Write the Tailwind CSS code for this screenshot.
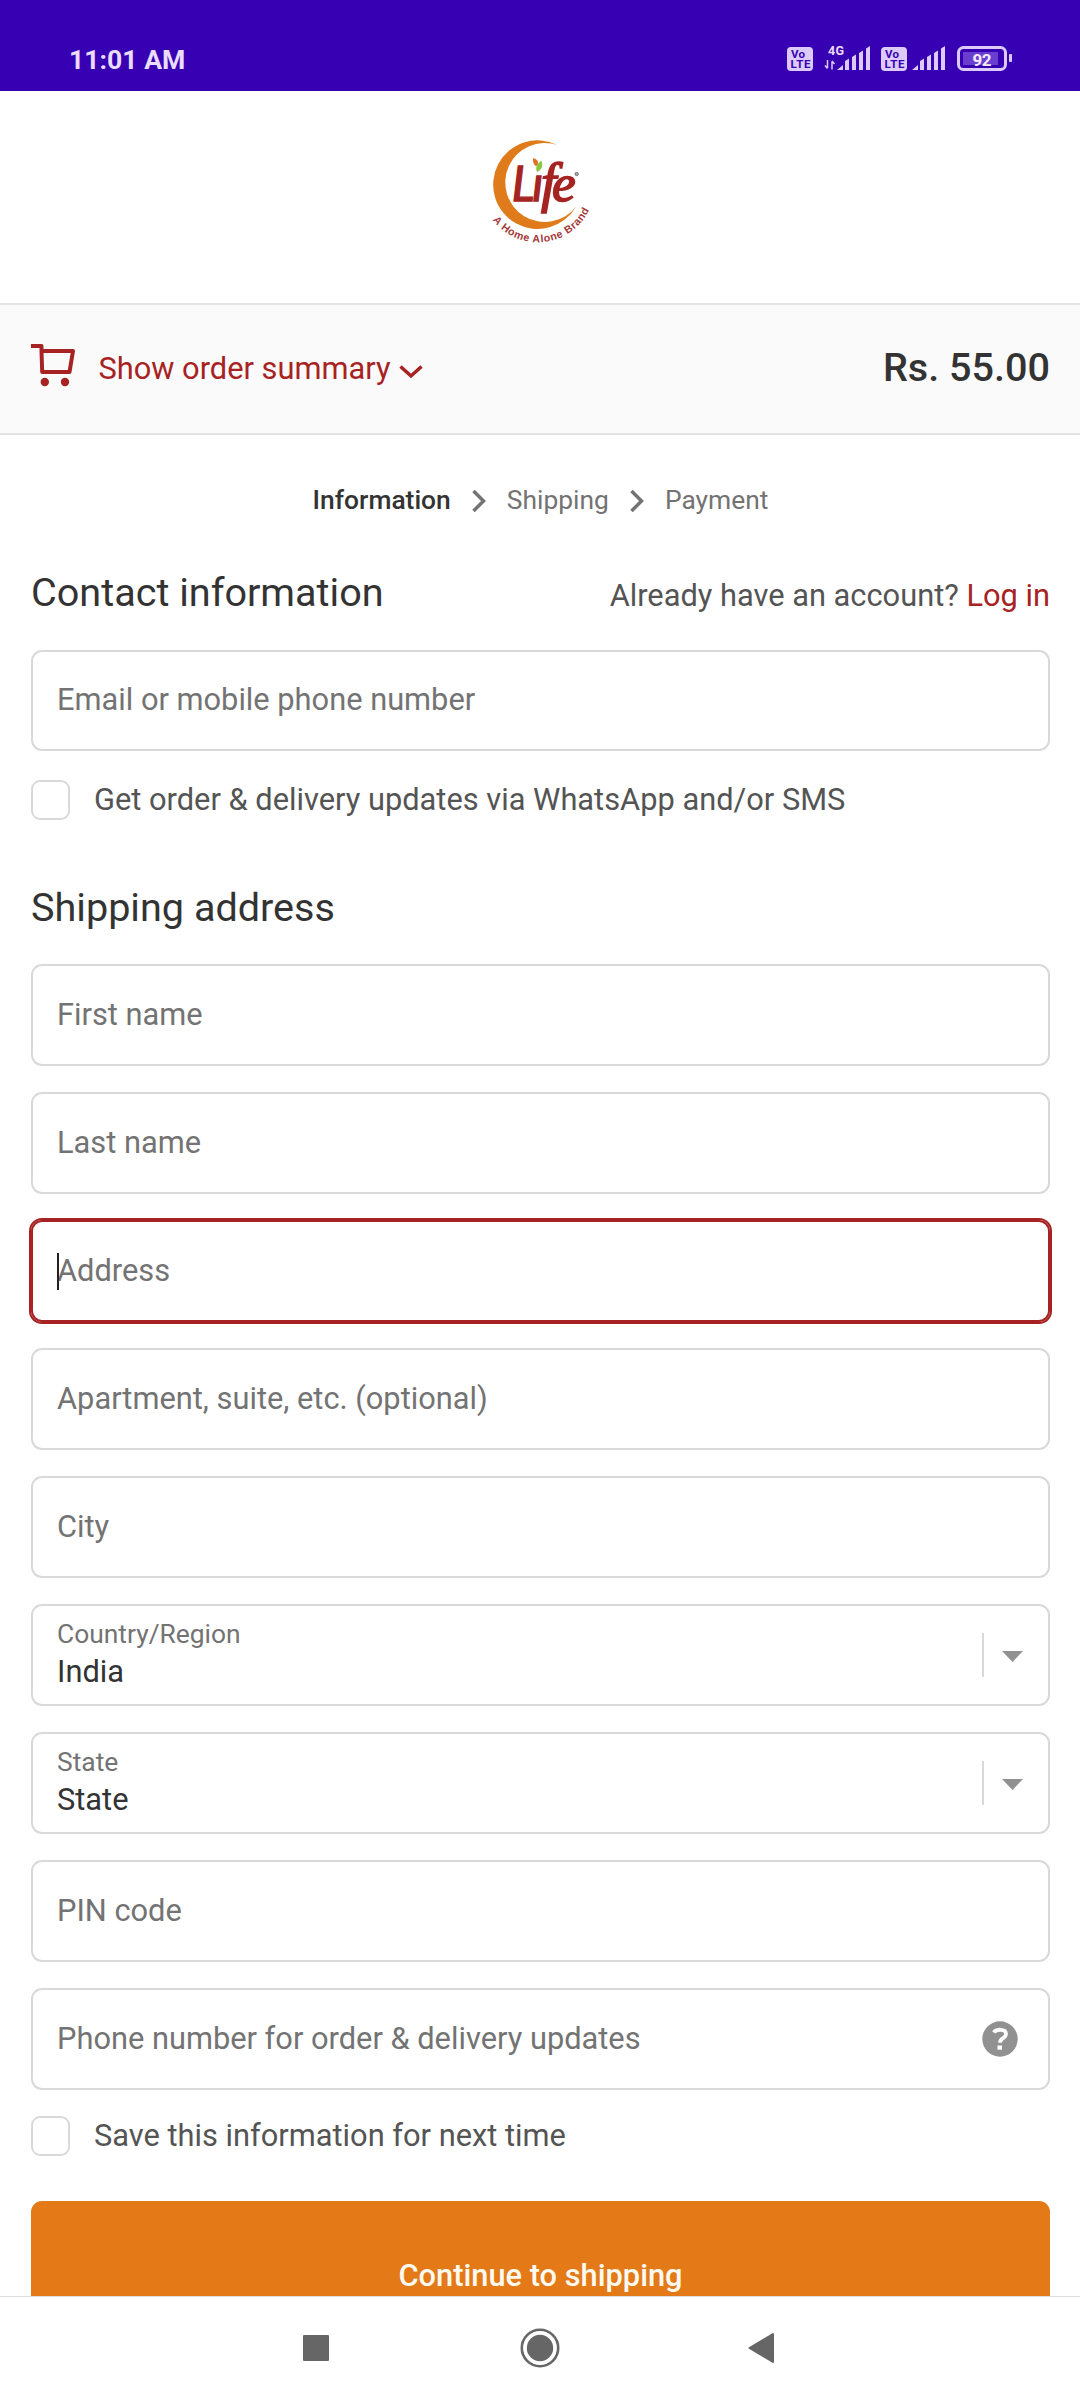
<!DOCTYPE html>
<html lang="en">
<head>
    <meta charset="UTF-8">
    <meta name="viewport" content="width=device-width, initial-scale=1.0">
    <title>Information - Life - Checkout</title>
    <script src="https://cdn.jsdelivr.net/npm/@tailwindcss/browser@4"></script>
</head>
<body class="bg-white">
    <div class="w-[1080px] h-[2400px] overflow-hidden flex flex-col bg-white font-[Roboto,sans-serif] text-[30.8px] text-[#545454]">

        <!-- Status bar -->
        <div class="h-[91px] shrink-0 bg-[#3700b3] flex justify-between pt-[40px] pl-[69px] pr-[68px] text-[#eadcff]">
            <span class="text-[26.6px] leading-10 font-bold">11:01 AM</span>
            <svg class="w-[226px] h-[40px]" viewBox="786 40 226 40" fill="#dccbfa" font-family="Roboto, sans-serif">
                <rect x="787" y="47" width="26" height="24" rx="4" />
                <text x="791" y="57.500" font-size="11.500" font-weight="700" fill="#3700b3" textLength="14">Vo</text>
                <text x="790.500" y="68" font-size="11.500" font-weight="700" fill="#3700b3" textLength="20">LTE</text>
                <text x="828" y="55" font-size="12.5" font-weight="700" fill="#eadcff" textLength="16">4G</text>
                <path d="M827.5 60v8M825 65.5l2.5 3M832 69.500v-8M832 61l2.500 3" stroke="#dccbfa" stroke-width="1.500" fill="none" />
                <path d="M837 70l6-5v5zM845 61l4-2.500v11.500h-4zM852 57l4-2.500v15.500h-4zM859 53l4-2.500v19.500h-4zM866 48.500l4-2.500v24h-4z" />
                <rect x="881" y="47" width="26" height="24" rx="4" />
                <text x="885" y="57.500" font-size="11.500" font-weight="700" fill="#3700b3" textLength="14">Vo</text>
                <text x="884.500" y="68" font-size="11.500" font-weight="700" fill="#3700b3" textLength="20">LTE</text>
                <path d="M912 70l6-5v5zM920 61l4-2.500v11.500h-4zM927 57l4-2.500v15.500h-4zM934 53l4-2.500v19.500h-4zM941 48.500l4-2.500v24h-4z" />
                <rect x="958.5" y="47.500" width="47" height="22" rx="5" fill="none" stroke="#dccbfa" stroke-width="3" />
                <rect x="963" y="52" width="35" height="13" fill="#6a3fd0" />
                <rect x="1009" y="54" width="3" height="8" rx="1" />
                <text x="972.500" y="65.500" font-size="17" font-weight="700" fill="#f3ebff" textLength="19">92</text>
            </svg>
        </div>

        <!-- Store logo -->
        <header class="h-[212px] shrink-0 flex justify-center pt-[29px]">
            <svg class="w-[140px] h-[140px]" viewBox="0 0 420 420" aria-label="Life, A Home Alone Brand">
                <path d="M262 75A133 133 0 1 0 318 260A118.500 118.500 0 1 1 262 75z" fill="#e07b1b" />
                <text y="242" font-style="italic" fill="#a52422" stroke="#a52422"><tspan x="125" font-family="Lato, sans-serif" font-weight="400" font-size="143" stroke-width="4">L</tspan><tspan x="187" font-family="Lato, sans-serif" font-weight="400" font-size="143" stroke-width="4">ı</tspan><tspan x="213" font-family="Liberation Serif, serif" font-size="165" stroke-width="5">f</tspan><tspan x="246" font-family="Liberation Serif, serif" font-size="160" stroke-width="5">e</tspan></text>
                <path d="M189 115c12 2 18 9 14 22l-8 0c-5-6-7-14-6-22z" fill="#dc7526" />
                <path d="M214 122c6 14 3 26-13 34c-6-13-1-25 13-34z" fill="#8cc63f" />
                <circle cx="320" cy="162" r="5" fill="#aaa" stroke="#777" stroke-width="3" />
                <path id="tagline" d="M68 300A171 171 0 0 0 360 265" fill="none" />
                <text font-family="Liberation Sans, sans-serif" font-size="32" font-weight="700" fill="#a5393b">
                    <textPath href="#tagline" textLength="348">A Home Alone Brand</textPath>
                </text>
            </svg>
        </header>

        <!-- Order summary toggle -->
        <div class="h-[132px] shrink-0 flex items-start justify-between pl-[31px] pr-[30px] border-y-2 border-[#e3e3e3] bg-[#fafafa]">
            <div class="flex text-[#a72323] pt-[38px]">
                <svg class="w-[46px] h-[46px]" viewBox="31 343 46 46" fill="none" stroke="currentColor" stroke-width="4">
                    <path d="M31 346h10.500v5M41.500 351h31.500l-3.500 21h-27.300z" stroke-linejoin="round" />
                    <circle cx="44.800" cy="382" r="4.200" fill="currentColor" stroke="none" />
                    <circle cx="65" cy="382" r="4.200" fill="currentColor" stroke="none" />
                </svg>
                <span class="ml-[21.5px] mt-[6px] leading-[40px]">Show order summary</span>
                <svg class="w-[24px] h-[16px] ml-[8px] mt-[21px]" viewBox="0 0 24 16" fill="none" stroke="currentColor" stroke-width="3.500">
                    <path d="M1.500 2.500l10.500 9.500l10.500-9.500" />
                </svg>
            </div>
            <span class="mt-[43px] leading-[40px] text-[39.6px] font-medium text-[#333]">Rs. 55.00</span>
        </div>

        <main class="h-[1861px] shrink-0 overflow-hidden flex flex-col pl-[31px] pr-[30px]">
            <!-- Breadcrumb -->
            <nav class="mt-[45px] flex justify-center items-center leading-[40px] text-[26.4px] text-[#737373]">
                <span class="font-medium text-[#333]">Information</span>
                <svg class="w-[16px] h-[24px] mx-[20px] mt-[2px]" viewBox="0 0 16 24" fill="none" stroke="#737373" stroke-width="3.500">
                    <path d="M2.500 2l10 10l-10 10" />
                </svg>
                <span>Shipping</span>
                <svg class="w-[16px] h-[24px] mx-[20px] mt-[2px]" viewBox="0 0 16 24" fill="none" stroke="#737373" stroke-width="3.500">
                    <path d="M2.500 2l10 10l-10 10" />
                </svg>
                <span>Payment</span>
            </nav>

            <!-- Contact -->
            <div class="mt-[49px] h-[48px] shrink-0 flex justify-between items-baseline leading-[48px]">
                <h2 class="text-[39.6px] text-[#333]">Contact information</h2>
                <p>Already have an account? <a class="text-[#a72323]">Log in</a></p>
            </div>
            <div class="mt-[33px] h-[101px] shrink-0 flex items-center px-[24px] border-2 border-[#d9d9d9] rounded-[11px] text-[#737373]">Email or mobile phone number</div>
            <label class="mt-[29px] h-[40px] shrink-0 flex items-center gap-[24px]">
                <span class="w-[39px] h-[40px] border-2 border-[#d9d9d9] rounded-[9px]"></span>
                <span class="leading-[40px]">Get order &amp; delivery updates via WhatsApp and/or SMS</span>
            </label>

            <!-- Shipping address -->
            <h2 class="mt-[64px] leading-[48px] text-[39.6px] text-[#333]">Shipping address</h2>
            <div class="mt-[32px] shrink-0 flex flex-col gap-[26px] text-[#737373]">
                <div class="h-[102px] flex items-center px-[24px] border-2 border-[#d9d9d9] rounded-[11px]">First name</div>
                <div class="h-[102px] flex items-center px-[24px] border-2 border-[#d9d9d9] rounded-[11px]">Last name</div>
                <div class="relative h-[102px] flex items-center px-[24px] border-2 border-[#a72323] ring-2 ring-[#a72323] rounded-[11px]">
                    <span class="absolute left-[24px] top-[31px] w-[2px] h-[37px] bg-[#222]"></span>
                    Address
                </div>
                <div class="h-[102px] flex items-center px-[24px] border-2 border-[#d9d9d9] rounded-[11px]">Apartment, suite, etc. (optional)</div>
                <div class="h-[102px] flex items-center px-[24px] border-2 border-[#d9d9d9] rounded-[11px]">City</div>
                <div class="h-[102px] flex items-center justify-between pl-[24px] pr-[25px] border-2 border-[#d9d9d9] rounded-[11px]">
                    <div class="flex flex-col -mt-[2px]">
                        <span class="text-[26.4px] leading-[36px]">Country/Region</span>
                        <span class="leading-[40px] text-[#333]">India</span>
                    </div>
                    <div class="flex items-center gap-[18px]">
                        <span class="w-[2px] h-[44px] bg-[#d9d9d9]"></span>
                        <svg class="w-[21px] h-[11px] mt-[2px]" viewBox="0 0 21 11"><path d="M0 0h21l-10.500 11z" fill="#919191" /></svg>
                    </div>
                </div>
                <div class="h-[102px] flex items-center justify-between pl-[24px] pr-[25px] border-2 border-[#d9d9d9] rounded-[11px]">
                    <div class="flex flex-col -mt-[2px]">
                        <span class="text-[26.4px] leading-[36px]">State</span>
                        <span class="leading-[40px] text-[#333]">State</span>
                    </div>
                    <div class="flex items-center gap-[18px]">
                        <span class="w-[2px] h-[44px] bg-[#d9d9d9]"></span>
                        <svg class="w-[21px] h-[11px] mt-[2px]" viewBox="0 0 21 11"><path d="M0 0h21l-10.500 11z" fill="#919191" /></svg>
                    </div>
                </div>
                <div class="h-[102px] flex items-center px-[24px] border-2 border-[#d9d9d9] rounded-[11px]">PIN code</div>
                <div class="h-[102px] flex items-center justify-between pl-[24px] pr-[30px] border-2 border-[#d9d9d9] rounded-[11px]">
                    <span>Phone number for order &amp; delivery updates</span>
                    <svg class="w-[36px] h-[36px]" viewBox="0 0 36 36" fill="none">
                        <circle cx="18" cy="18" r="17.700" fill="#919191" />
                        <path d="M11.800 11.500c2-3.300 12.200-4.500 12.200 1.600c0 4.600-6 3.400-6 8.600" stroke="#fff" stroke-width="3.800" />
                        <path d="M15.500 24.500h4.500v4.200h-4.500z" fill="#fff" />
                    </svg>
                </div>
            </div>
            <label class="mt-[26px] h-[40px] shrink-0 flex items-center gap-[24px]">
                <span class="w-[39px] h-[40px] border-2 border-[#d9d9d9] rounded-[9px]"></span>
                <span class="leading-[40px]">Save this information for next time</span>
            </label>
            <button class="mt-[45px] h-[150px] shrink-0 rounded-[11px] bg-[#e47918] text-[#fffaf0] font-medium">Continue to shipping</button>
        </main>

        <!-- System navigation -->
        <div class="h-[104px] shrink-0 border-t border-[#dedede] flex justify-center">
            <svg class="w-[480px] h-[103px]" viewBox="300 2297 480 103" fill="#666">
                <rect x="303" y="2335" width="26" height="26" rx="1" />
                <circle cx="540" cy="2348" r="18.200" fill="none" stroke="#666" stroke-width="2.600" />
                <circle cx="540" cy="2348" r="13.200" />
                <path d="M749.500 2348l23.500-14v28z" stroke="#666" stroke-width="2" stroke-linejoin="round" />
            </svg>
        </div>
    </div>
</body>
</html>
